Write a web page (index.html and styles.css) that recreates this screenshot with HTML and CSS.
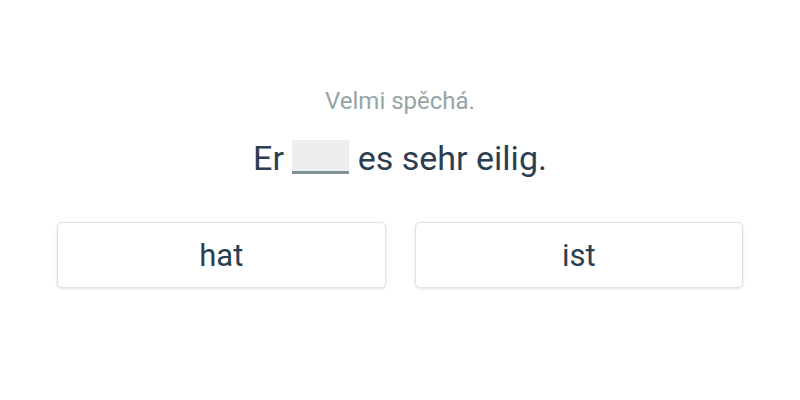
FILE: index.html
```html
<!DOCTYPE html>
<html>
<head>
<meta charset="utf-8">
<link rel="stylesheet" href="styles.css">
</head>
<body>
<div class="exercise">
  <div class="hint">Velmi spěchá.</div>
  <div class="sentence">Er <span class="blank"></span> es sehr eilig.</div>
  <div class="options">
    <button class="option">hat</button>
    <button class="option">ist</button>
  </div>
</div>
</body>
</html>
```
FILE: styles.css
```css
html, body {
  margin: 0;
  padding: 0;
  background: #fff;
  font-family: Roboto, "Noto Sans", sans-serif;
}
.exercise {
  width: 800px;
  height: 400px;
  box-sizing: border-box;
  padding: 86px 57px 0;
  display: flex;
  flex-direction: column;
  align-items: center;
}
.hint {
  font-size: 24px;
  line-height: 30px;
  color: #95a5a6;
}
.sentence {
  margin-top: 22px;
  font-size: 34px;
  line-height: 40px;
  color: #2c3e50;
}
.blank {
  display: inline-block;
  width: 57px;
  height: 31px;
  background: #eceef0;
  border-bottom: 3px solid #7f9293;
  vertical-align: -4px;
}
.options {
  margin-top: 44px;
  width: 100%;
  display: grid;
  grid-template-columns: 1fr 1fr;
  gap: 29px;
}
.option {
  height: 66px;
  background: #fff;
  border: 1px solid #dfe3e6;
  border-radius: 5px;
  box-shadow: 0 1px 3px rgba(0,0,0,0.12);
  font-family: Roboto, "Noto Sans", sans-serif;
  font-size: 31px;
  color: #2c3e50;
  padding: 0;
}
```
